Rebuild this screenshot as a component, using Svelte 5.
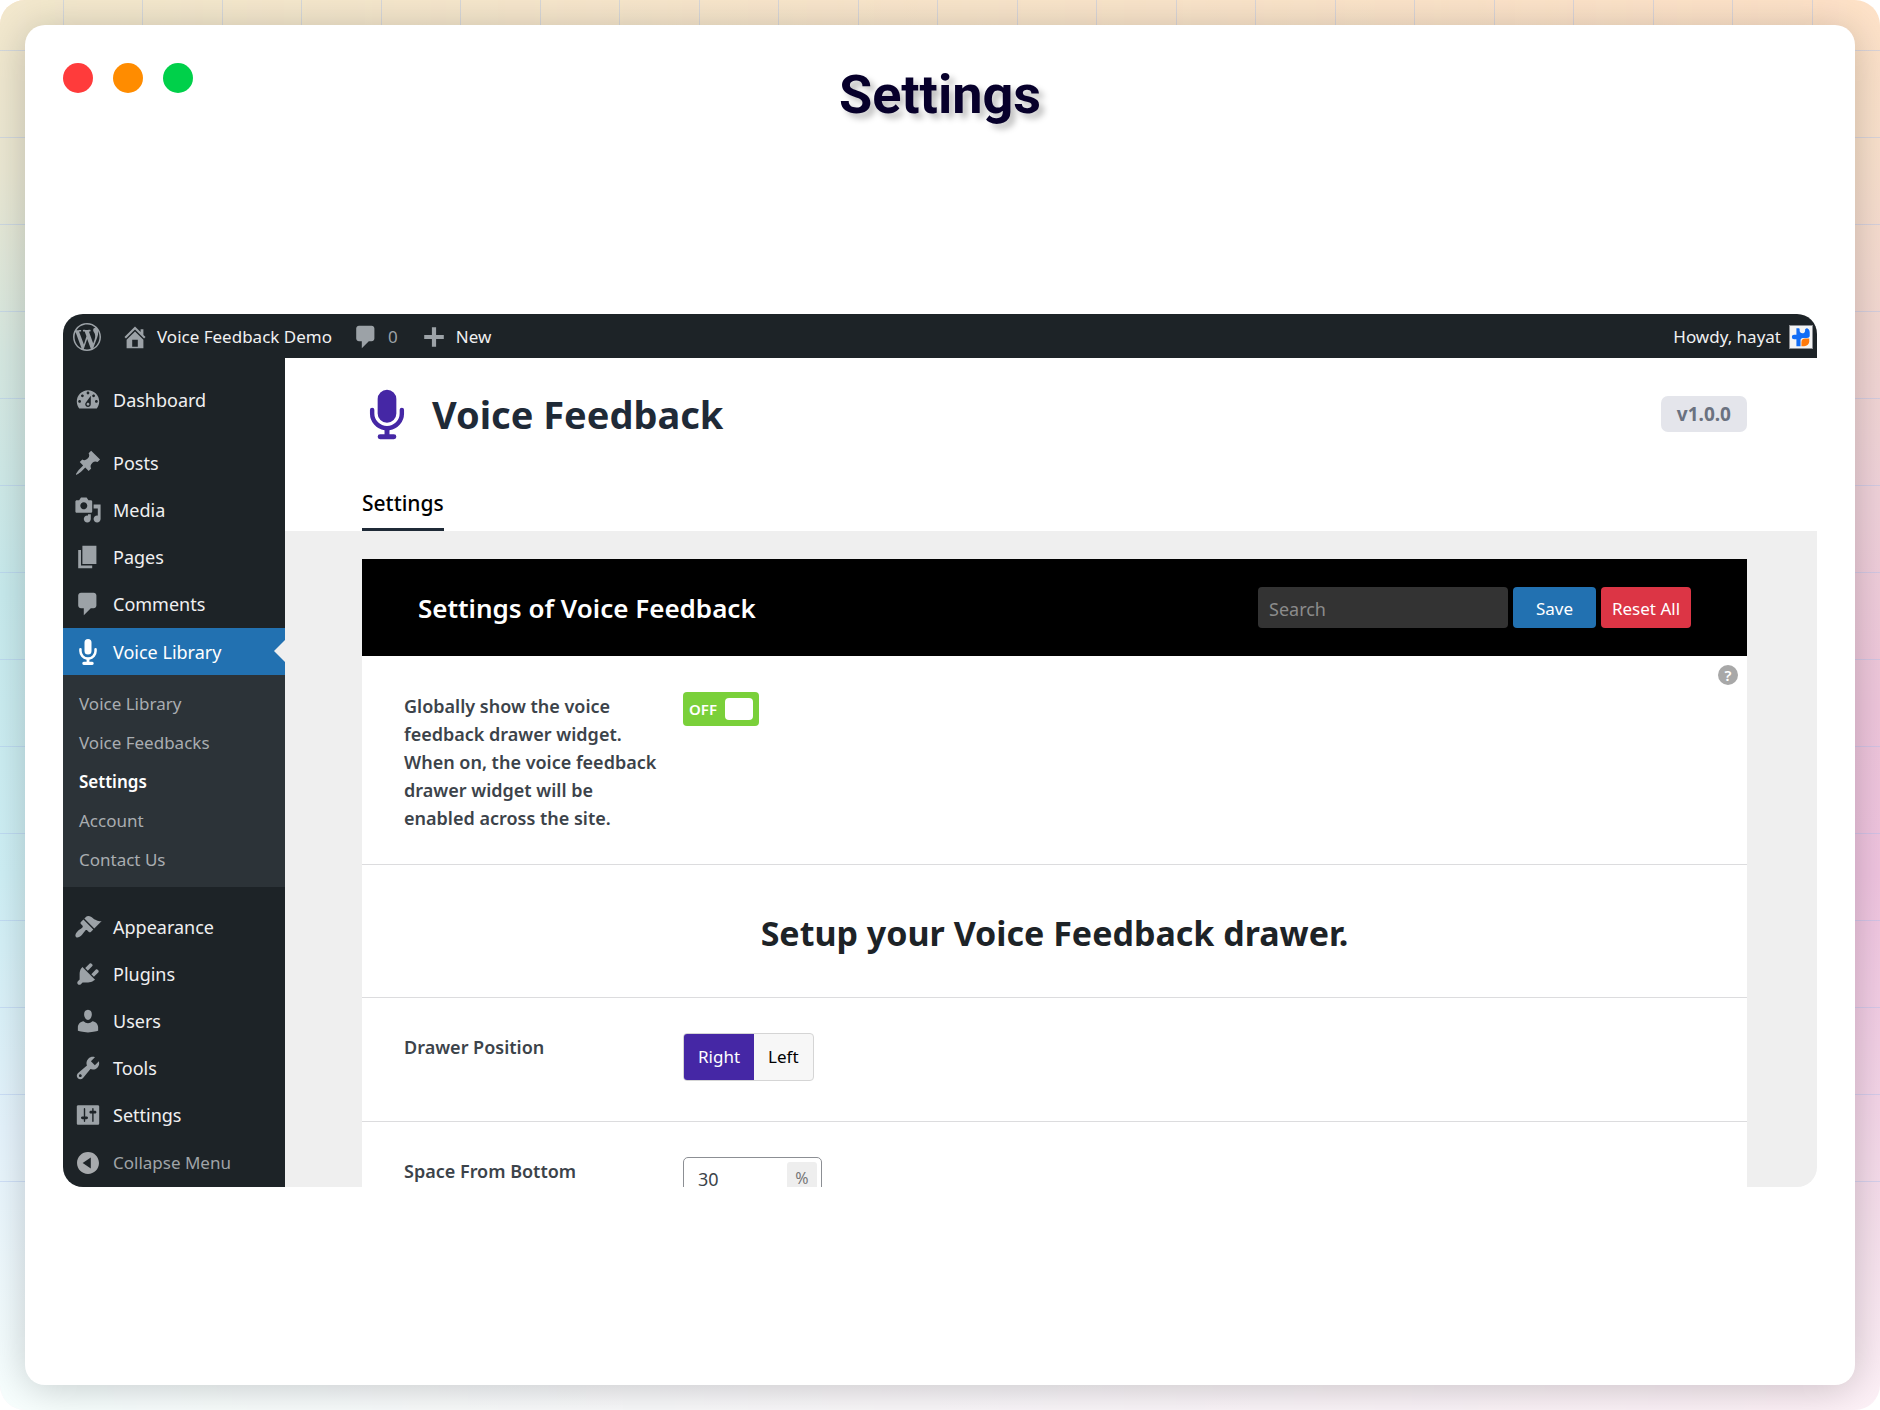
<script>
  const icons = {
    wordpress: 'M20 10c0-5.51-4.49-10-10-10C4.48 0 0 4.49 0 10c0 5.52 4.48 10 10 10 5.51 0 10-4.48 10-10zM7.78 15.37L4.37 6.22c.55-.02 1.17-.08 1.17-.08.5-.06.44-1.13-.06-1.11 0 0-1.45.11-2.37.11-.18 0-.37 0-.58-.01C4.12 2.69 6.87 1.11 10 1.11c2.33 0 4.45.87 6.05 2.34-.68-.11-1.65.39-1.65 1.58 0 .74.45 1.36.9 2.1.35.61.55 1.36.55 2.46 0 1.49-1.4 5-1.4 5l-3.03-8.37c.54-.02.82-.17.82-.17.5-.05.44-1.25-.06-1.22 0 0-1.44.12-2.38.12-.87 0-2.33-.12-2.33-.12-.5-.03-.56 1.2-.06 1.22l.92.08 1.26 3.41zM17.41 10c.24-.64.74-1.87.43-4.25.7 1.29 1.05 2.71 1.05 4.25 0 3.29-1.73 6.24-4.4 7.78.97-2.59 1.94-5.2 2.92-7.78zM6.1 18.09C3.12 16.65 1.11 13.53 1.11 10c0-1.3.23-2.48.72-3.59C3.25 10.3 4.67 14.2 6.1 18.09zm4.03-6.63l2.58 6.98c-.86.29-1.76.45-2.71.45-.79 0-1.57-.11-2.29-.33.81-2.38 1.62-4.74 2.42-7.1z',
    home: 'M16 8.5l1.53 1.53-1.06 1.06L10 4.6l-6.47 6.49-1.06-1.06L10 2.5l4 4v-2h2v4zm-6-2.46l6 5.99V18H4v-5.97zM12 17v-5H8v5h4z',
    plus: 'M17 8.5v3h-5.5V17h-3v-5.5H3v-3h5.5V3h3v5.5z',
    dashboard: 'M3.76 16h12.48c1.1-1.37 1.76-3.11 1.76-5 0-4.42-3.58-8-8-8s-8 3.58-8 8c0 1.89.66 3.63 1.76 5zM10 4c.55 0 1 .45 1 1s-.45 1-1 1-1-.45-1-1 .45-1 1-1zM6 6c.55 0 1 .45 1 1s-.45 1-1 1-1-.45-1-1 .45-1 1-1zm8 0c.55 0 1 .45 1 1s-.45 1-1 1-1-.45-1-1 .45-1 1-1zm-5.37 5.55L12 7v6c0 1.1-.9 2-2 2s-2-.9-2-2c0-.57.24-1.08.63-1.45zM4 10c.55 0 1 .45 1 1s-.45 1-1 1-1-.45-1-1 .45-1 1-1zm12 0c.55 0 1 .45 1 1s-.45 1-1 1-1-.45-1-1 .45-1 1-1zm-5 3c0-.55-.45-1-1-1s-1 .45-1 1 .45 1 1 1 1-.45 1-1z',
    post: 'M10.44 3.02l1.82-1.82 6.36 6.35-1.83 1.82c-1.05-.68-2.48-.57-3.41.36l-.75.75c-.92.93-1.04 2.35-.35 3.41l-1.83 1.82-2.41-2.41-2.8 2.79c-.42.42-3.38 2.71-3.8 2.29s1.86-3.39 2.28-3.81l2.79-2.79L4.1 9.36l1.83-1.82c1.05.69 2.48.57 3.4-.36l.75-.75c.93-.92 1.05-2.35.36-3.41z',
    media: 'M13 11V4c0-.55-.45-1-1-1h-1.67L9 1H5L3.67 3H2c-.55 0-1 .45-1 1v7c0 .55.45 1 1 1h10c.55 0 1-.45 1-1zM7 4.5c1.38 0 2.5 1.12 2.5 2.5S8.38 9.5 7 9.5 4.5 8.38 4.5 7 5.62 4.5 7 4.5zM14 6h5v10.5c0 1.38-1.12 2.5-2.5 2.5S14 17.88 14 16.5s1.12-2.5 2.5-2.5c.17 0 .34.02.5.05V9h-3V6zm-4 8.05V13h2v3.5c0 1.38-1.12 2.5-2.5 2.5S7 17.88 7 16.5 8.12 14 9.5 14c.17 0 .34.02.5.05z',
    page: 'M6 15V2h10v13H6zm-1 1h8v2H3V5h2v11z',
    comments: 'M5 2h9c1.1 0 2 .9 2 2v7c0 1.1-.9 2-2 2h-2l-5 5v-5H5c-1.1 0-2-.9-2-2V4c0-1.1.9-2 2-2z',
    mic: 'M10 .8a2.5 2.5 0 0 1 2.5 2.5v6a2.5 2.5 0 0 1-5 0v-6A2.5 2.5 0 0 1 10 .8zM4.6 7.1a.9.9 0 0 1 .9.9v1.3a4.5 4.5 0 0 0 9 0V8a.9.9 0 0 1 1.8 0v1.3a6.3 6.3 0 0 1-5.3 6.2V17h2a1.1 1.1 0 0 1 0 2.200H7A1.1 1.1 0 0 1 7 17h2v-1.500a6.3 6.3 0 0 1-5.3-6.200V8a.9.9 0 0 1 .9-.9z',
    appearance: 'M14.48 11.06L7.41 3.99l1.5-1.5c.5-.56 2.3-.47 3.51.32 1.21.8 1.43 1.28 2.91 2.1 1.18.64 2.45 1.26 4.45.85zm-.71.71L6.7 4.7 4.93 6.47c-.39.39-.39 1.02 0 1.41l1.06 1.06c.39.39.39 1.03 0 1.42-.6.6-1.43 1.11-2.21 1.69-.35.26-.7.53-1.01.84C1.43 14.23.4 16.08 1.4 17.07c.99 1 2.84-.03 4.18-1.36.31-.31.58-.66.85-1.02.57-.78 1.08-1.61 1.69-2.21.39-.39 1.02-.39 1.41 0l1.06 1.06c.39.39 1.02.39 1.41 0z',
    plugins: 'M13.11 4.36L9.87 7.6 8 5.73l3.24-3.24c.35-.34 1.05-.2 1.56.32.52.51.66 1.21.31 1.55zm-8 1.77l.91-1.12 9.01 9.01-1.19.84c-.71.71-2.63 1.16-3.82 1.16H6.14L4.9 17.26c-.59.59-1.54.59-2.12 0-.59-.58-.59-1.53 0-2.12l1.24-1.24v-3.88c0-1.13.4-3.19 1.09-3.89zm7.26 3.97l3.24-3.24c.34-.35 1.04-.21 1.55.31.52.51.66 1.21.31 1.55l-3.24 3.25z',
    users: 'M10 9.25c-2.27 0-2.73-3.44-2.73-3.44C7 4.02 7.82 2 9.97 2c2.16 0 2.98 2.02 2.71 3.81 0 0-.41 3.44-2.68 3.44zM6.8 10.2c1 .9 2 1.4 3.200 1.400s2.200-.5 3.200-1.400c2.400.3 4.040 2.200 4.040 4.330v2.490s-3.650 1.130-7.240 1.130c-3.650 0-7.240-1.130-7.240-1.130v-2.490c0-2.130 1.640-4.030 4.040-4.330z',
    tools: 'M16.68 9.77c-1.34 1.34-3.3 1.67-4.95.99l-5.41 6.52c-.99.99-2.59.99-3.58 0s-.99-2.59 0-3.57l6.52-5.42c-.68-1.65-.35-3.61.99-4.95 1.28-1.28 3.12-1.62 4.72-1.06l-2.89 2.89 2.82 2.82 2.86-2.87c.53 1.58.18 3.39-1.08 4.65zM3.81 16.21c.4.39 1.04.39 1.43 0 .4-.4.4-1.04 0-1.43-.39-.4-1.03-.4-1.43 0-.39.39-.39 1.03 0 1.43z',
    settings: 'M18 16V4c0-.55-.45-1-1-1H3c-.55 0-1 .45-1 1v12c0 .55.45 1 1 1h14c.55 0 1-.45 1-1zM8 11h1c.55 0 1 .45 1 1s-.45 1-1 1H8v1.5c0 .28-.22.5-.5.5s-.5-.22-.5-.5V13H6c-.55 0-1-.45-1-1s.45-1 1-1h1V5.5c0-.28.22-.5.5-.5s.5.22.5.5V11zm5-2h-1c-.55 0-1-.45-1-1s.45-1 1-1h1V5.5c0-.28.22-.5.5-.5s.5.22.5.5V7h1c.55 0 1 .45 1 1s-.45 1-1 1h-1v5.5c0 .28-.22.5-.5.5s-.5-.22-.5-.5V9z',
    collapse: 'M10 2.16c4.33 0 7.84 3.51 7.84 7.84s-3.51 7.84-7.84 7.84S2.16 14.33 2.16 10 5.71 2.16 10 2.16zm2 11.72V6.12L6.18 9.97z'
  };

  const content = [
    ['post', 'Posts'],
    ['media', 'Media'],
    ['page', 'Pages'],
    ['comments', 'Comments']
  ];
  const library = ['Voice Library', 'Voice Feedbacks', 'Settings', 'Account', 'Contact Us'];
  const admin = [
    ['appearance', 'Appearance'],
    ['plugins', 'Plugins'],
    ['users', 'Users'],
    ['tools', 'Tools'],
    ['settings', 'Settings']
  ];

  let position = $state('Right');
  let globalOff = $state(true);
  let space = $state('30');
  let query = $state('');
</script>

{#snippet icon(name)}
  <svg class="icon" viewBox="0 0 20 20" fill-rule="evenodd" aria-hidden="true"><path d={icons[name]} /></svg>
{/snippet}

{#snippet item(name, label)}
  <a class="item" href="#{name}">{@render icon(name)}<span>{label}</span></a>
{/snippet}

<div class="stage">
  <div class="grid"></div>
  <div class="window">
    <header class="titlebar">
      <div class="lights"><i class="red"></i><i class="amber"></i><i class="green"></i></div>
      <h1>Settings</h1>
    </header>

    <div class="app">
      <div class="adminbar">
        <a class="logo" href="#wordpress" aria-label="WordPress">{@render icon('wordpress')}</a>
        <a class="site" href="#site">{@render icon('home')}Voice Feedback Demo</a>
        <a class="count" href="#comments">{@render icon('comments')}0</a>
        <a class="new" href="#new">{@render icon('plus')}New</a>
        <a class="account" href="#profile">
          Howdy, hayat
          <svg class="avatar" viewBox="0 0 24 24" aria-hidden="true">
            <rect width="24" height="24" fill="#f4f4f4" />
            <path fill="#126df5" d="M7 2.500h2.500c.6 0 1 .4 1 1v1.500c0 4 6 4 6-.2V3.500l1.500-1c2 0 3.500 2 3.500 4.500v3.500c0 1.500-1.500 2.500-3 2.500h-4.500c-1.500 0-2.500 1-2.500 2.500V22H7v-7.500H4.500a2.500 2.500 0 1 1 0-5H7z" />
            <path fill="#ff7a0c" d="M12.500 22v-4.500a4 4 0 0 1 4-4H21v3a5.500 5.500 0 0 1-5.500 5.500z" />
          </svg>
        </a>
      </div>

      <div class="body">
        <nav class="sidebar">
          <div class="group">{@render item('dashboard', 'Dashboard')}</div>
          <div class="group">
            {#each content as [name, label]}{@render item(name, label)}{/each}
            <a class="item current" href="#mic">{@render icon('mic')}<span>Voice Library</span></a>
            <div class="submenu">
              {#each library as label}
                <a href="#library" class:active={label === 'Settings'}>{label}</a>
              {/each}
            </div>
          </div>
          <div class="group">
            {#each admin as [name, label]}{@render item(name, label)}{/each}
            <button class="item collapse">{@render icon('collapse')}<span>Collapse Menu</span></button>
          </div>
        </nav>

        <main>
          <div class="head">
            <div class="brand">
              <svg class="mark" viewBox="1 0 18 20" aria-hidden="true">
                <path d="M10 1a3.400 3.400 0 0 1 3.400 3.400v5.200a3.400 3.400 0 0 1-6.800 0V4.400A3.400 3.400 0 0 1 10 1zM4.600 7.500a.8.8 0 0 1 .8.8v1.300a4.600 4.600 0 0 0 9.200 0V8.300a.8.8 0 0 1 1.600 0v1.300a6.200 6.200 0 0 1-5.300 6.130v1.470h1.600a.9.9 0 0 1 0 1.800h-5a.9.9 0 0 1 0-1.800h1.600v-1.470a6.200 6.200 0 0 1-5.300-6.130V8.300a.8.8 0 0 1 .8-.8z" />
              </svg>
              <h2>Voice Feedback</h2>
              <span class="version">v1.0.0</span>
            </div>
            <a class="tab" href="#settings">Settings</a>
          </div>

          <section class="panel">
            <div class="toolbar">
              <h3>Settings of Voice Feedback</h3>
              <input class="search" type="search" placeholder="Search" aria-label="Search" bind:value={query} />
              <button class="btn save">Save</button>
              <button class="btn reset">Reset All</button>
            </div>

            <div class="field tall">
              <label class="label" for="global">Globally show the voice feedback drawer widget. When on, the voice feedback drawer widget will be enabled across the site.</label>
              <label class="switch">
                <input id="global" type="checkbox" bind:checked={globalOff} />
                <span>OFF</span>
                <i></i>
              </label>
              <button class="help" aria-label="Help">?</button>
            </div>

            <h2 class="setup">Setup your Voice Feedback drawer.</h2>

            <div class="field">
              <span class="label" id="position">Drawer Position</span>
              <div class="segments" role="radiogroup" aria-labelledby="position">
                {#each ['Right', 'Left'] as side}
                  <label class:on={position === side}>
                    <input type="radio" name="position" value={side} bind:group={position} />{side}
                  </label>
                {/each}
              </div>
            </div>

            <div class="field">
              <label class="label" for="space">Space From Bottom</label>
              <div class="number">
                <input id="space" type="text" inputmode="numeric" bind:value={space} />
                <span>%</span>
              </div>
            </div>
          </section>
        </main>
      </div>
    </div>
  </div>
</div>

<style>
  :global(body) {
    background: #fff;
  }
  .stage,
  .stage * {
    box-sizing: border-box;
  }
  .stage {
    position: relative;
    height: 100vh;
    min-height: 1000px;
    padding: 25px;
    overflow: hidden;
    border-radius: 25px;
    font-family: 'Segoe UI', 'Noto Sans', sans-serif;
    font-size: 18px;
    background: linear-gradient(#fee2c8 0%, #f9e1cc 10%, #f3d8d2 23%, #f0d2da 35%, #efc6dc 50%, #f0c4e0 62%, #f3d0e6 74%, #f6dfec 86%, #fdf1f7 100%);
  }
  .stage::before {
    content: '';
    position: absolute;
    inset: 0;
    background: linear-gradient(#f3e8cd 0%, #ebe8d3 12%, #d7e9e2 25%, #c8ebee 42%, #cff0f6 62%, #e6f4fd 80%, #f8fffe 100%);
    mask-image: linear-gradient(to right, #000, transparent);
  }
  .grid {
    position: absolute;
    inset: -36px 0 220px -16px;
    background:
      repeating-linear-gradient(to right, transparent 0 79px, #a9bfea66 79px 80px, transparent 80px 158px, #a9bfea66 158px 159px),
      repeating-linear-gradient(transparent 0 86px, #a9c0f066 86px 87px);
  }
  .window {
    position: relative;
    display: flex;
    flex-direction: column;
    height: 100%;
    padding: 38px 38px 198px;
    border-radius: 20px;
    background: #fff;
    box-shadow: 0 4px 40px rgba(0, 0, 0, 0.2);
  }
  .titlebar {
    display: grid;
    grid-template-columns: 1fr auto 1fr;
    align-items: start;
    height: 251px;
    flex: none;
  }
  .lights {
    display: flex;
    gap: 20px;
  }
  .lights i {
    width: 30px;
    height: 30px;
    border-radius: 50%;
  }
  .red { background: #ff3b3b; }
  .amber { background: #ff8c00; }
  .green { background: #00d04a; }
  h1 {
    margin: 0;
    font: 700 54px/64px Roboto, sans-serif;
    color: #07002b;
    text-shadow: 5px 5px 6px rgba(0, 0, 0, 0.25);
  }
  h2,
  h3 {
    margin: 0;
  }
  a {
    color: inherit;
    text-decoration: none;
  }
  button,
  input {
    font: inherit;
    border: 0;
  }
  .icon {
    width: 28px;
    height: 28px;
    flex: none;
    fill: #9ca2a7;
  }

  .app {
    flex: 1;
    min-height: 0;
    display: flex;
    flex-direction: column;
    overflow: hidden;
    border-radius: 20px;
    background: #efefef;
  }
  .adminbar {
    display: flex;
    align-items: center;
    flex: none;
    height: 44px;
    padding: 1px 4px 0 10px;
    background: #1d2327;
    color: #f0f0f1;
    font-size: 17px;
  }
  .adminbar a {
    display: flex;
    align-items: center;
  }
  .logo { margin-right: 20px; }
  .site { gap: 8px; margin-right: 20px; }
  .count { gap: 8px; margin-right: 22px; color: #9ca2a7; }
  .new { gap: 8px; }
  .adminbar .account {
    gap: 8px;
    margin-left: auto;
  }
  .avatar {
    width: 24px;
    height: 24px;
    border: 1px solid #8c8f94;
  }

  .body {
    flex: 1;
    min-height: 0;
    display: flex;
  }
  .sidebar {
    display: flex;
    flex-direction: column;
    gap: 16px;
    width: 222px;
    flex: none;
    padding-top: 18px;
    background: #1d2327;
    color: #f0f0f1;
  }
  .item {
    position: relative;
    display: flex;
    align-items: center;
    gap: 11px;
    width: 100%;
    height: 47px;
    padding: 0 11px;
    text-align: left;
  }
  .collapse {
    height: 49px;
    background: none;
    color: #a0a4a8;
    font-size: 17px;
  }
  .collapse .icon { fill: #a7aaad; }
  .current {
    margin-top: 1px;
    background: #2271b1;
    color: #fff;
  }
  .current .icon { fill: #fff; }
  .current::after {
    content: '';
    position: absolute;
    right: 0;
    top: 12px;
    border: solid transparent;
    border-width: 11px 11px 11px 0;
    border-right-color: #efefef;
  }
  .submenu {
    display: flex;
    flex-direction: column;
    padding: 9px 16px 8px;
    background: #2c3338;
    color: #a9adb1;
    font-size: 17px;
    line-height: 39px;
  }
  .submenu .active {
    color: #fff;
    font-weight: 600;
  }

  main {
    flex: 1;
    min-width: 0;
    overflow: hidden;
  }
  .head {
    display: flex;
    flex-direction: column;
    align-items: flex-start;
    height: 173px;
    padding: 24px 70px 0 77px;
    background: #fff;
  }
  .brand {
    display: flex;
    align-items: center;
    gap: 20px;
    width: 100%;
    height: 64px;
  }
  .mark {
    width: 50px;
    height: 55px;
    fill: #4527a5;
  }
  .brand h2 {
    font-size: 38px;
    font-weight: 700;
    color: #1f2a37;
  }
  .version {
    margin-left: auto;
    padding: 0 16px;
    border-radius: 7px;
    background: #e4e5eb;
    color: #6b7280;
    font-size: 19px;
    font-weight: 700;
    line-height: 36px;
  }
  .tab {
    margin-top: auto;
    border-bottom: 3px solid #1f2a37;
    color: #000;
    font-size: 21px;
    font-weight: 500;
    line-height: 50px;
  }

  .panel {
    margin: 28px 70px 0 77px;
    background: #fff;
  }
  .toolbar {
    display: flex;
    align-items: center;
    gap: 5px;
    height: 97px;
    padding: 0 56px;
    background: #000;
  }
  .toolbar h3 {
    margin-right: auto;
    color: #fff;
    font-size: 26px;
    font-weight: 600;
  }
  .search {
    width: 250px;
    height: 41px;
    padding: 2px 11px 0;
    border-radius: 4px;
    background: #333;
    color: #fff;
  }
  .search::placeholder { color: #8b8b8b; }
  .btn {
    height: 41px;
    padding: 2px 0 0;
    border-radius: 4px;
    color: #fff;
    font-size: 17px;
  }
  .save {
    width: 83px;
    background: #2271b1;
  }
  .reset {
    width: 90px;
    background: #dc3545;
  }
  .field {
    position: relative;
    display: flex;
    gap: 20px;
    height: 124px;
    padding: 35px 42px;
    border-bottom: 1px solid #dcdcde;
  }
  .tall {
    height: 209px;
    padding-top: 36px;
  }
  .label {
    width: 259px;
    color: #3c434a;
    font-weight: 600;
    line-height: 28px;
  }
  .switch {
    display: flex;
    align-items: center;
    justify-content: space-between;
    width: 76px;
    height: 34px;
    padding: 0 6px;
    border-radius: 4px;
    background: #7ad03a;
    color: #fff;
    font-size: 15px;
    font-weight: 600;
  }
  .switch input,
  .segments input {
    position: absolute;
    opacity: 0;
  }
  .switch i {
    width: 28px;
    height: 22px;
    border-radius: 4px;
    background: #fff;
  }
  .help {
    position: absolute;
    top: 9px;
    right: 9px;
    width: 20px;
    height: 20px;
    padding: 0;
    border-radius: 50%;
    background: #a8a8a8;
    color: #fff;
    font-size: 15px;
    font-weight: 600;
    line-height: 20px;
  }
  .setup {
    height: 133px;
    border-bottom: 1px solid #dcdcde;
    color: #1d2327;
    font-size: 34px;
    line-height: 136px;
    text-align: center;
  }
  .segments {
    display: flex;
    height: 48px;
    border: 1px solid #d5d5d5;
    border-radius: 4px;
    background: #f7f7f7;
    overflow: hidden;
    color: #000;
    font-size: 17px;
  }
  .segments label {
    padding: 0 14px;
    line-height: 46px;
  }
  .segments .on {
    background: #4527a5;
    color: #fff;
  }
  .number {
    display: flex;
    align-items: center;
    width: 139px;
    height: 43px;
    padding: 4px;
    border: 1px solid #8c8f94;
    border-radius: 5px;
    background: #fff;
  }
  .number input {
    flex: 1;
    min-width: 0;
    height: 24px;
    padding: 0 10px;
    color: #3c434a;
    line-height: 24px;
  }
  .number span {
    width: 30px;
    border-radius: 3px;
    background: #eee;
    color: #777;
    font-size: 16px;
    line-height: 33px;
    text-align: center;
  }
</style>
